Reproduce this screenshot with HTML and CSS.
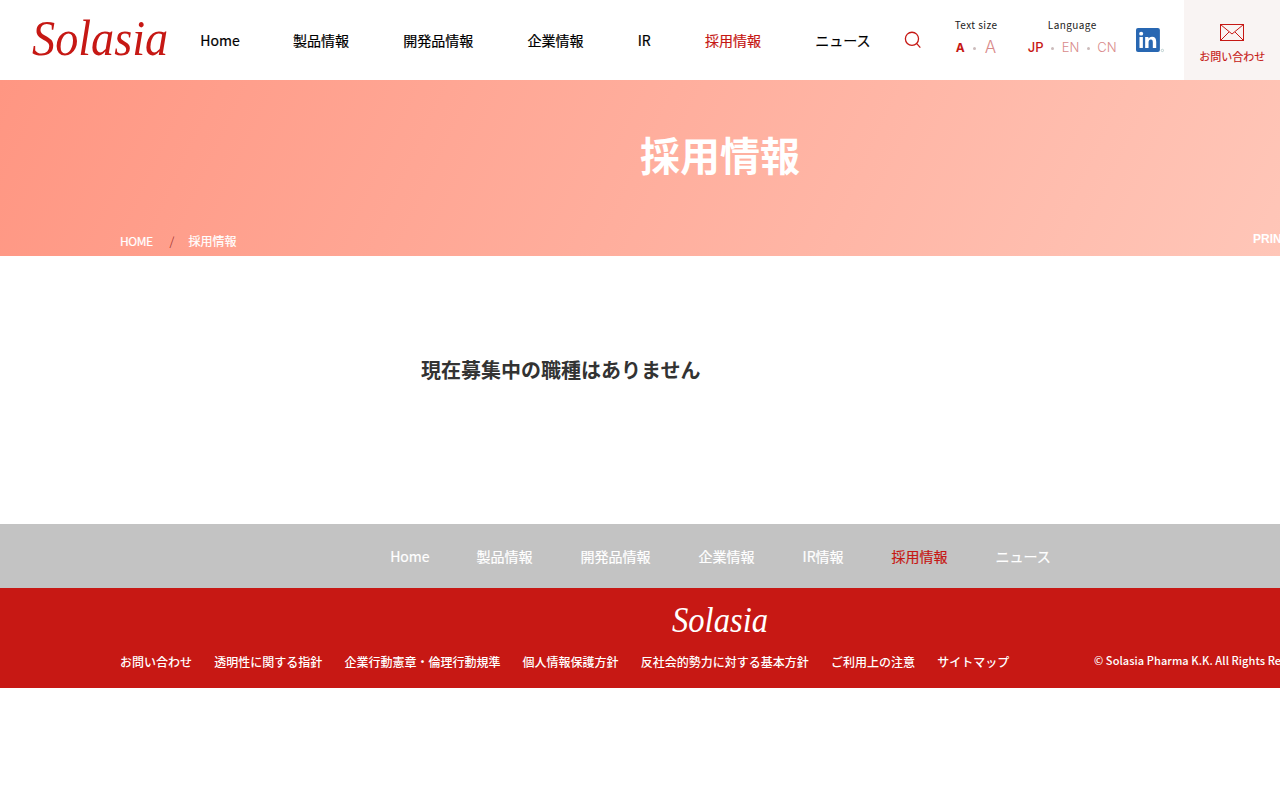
FILE: index.html
```html
<!DOCTYPE html>
<html lang="ja">
<head>
<meta charset="utf-8">
<title>採用情報 | Solasia</title>
<link rel="stylesheet" href="styles.css">
</head>
<body>
<header class="header">
  <a class="logo"><span>Solasia</span></a>
  <nav class="gnav">
    <a>Home</a><a>製品情報</a><a>開発品情報</a><a>企業情報</a><a>IR</a><a class="on">採用情報</a><a>ニュース</a>
  </nav>
  <svg class="search" width="18" height="18" viewBox="0 0 18 18" fill="none" stroke="#c61814" stroke-width="1.3"><circle cx="8" cy="7.8" r="6.6"/><path d="M12.8 12.6l3.6 4"/></svg>
  <div class="tool tool-size">
    <div class="tool-label">Text size</div>
    <div class="tool-row"><b class="cur">A</b><i class="dot"></i><span class="big">A</span></div>
  </div>
  <div class="tool tool-lang">
    <div class="tool-label">Language</div>
    <div class="tool-row"><b class="cur">JP</b><i class="dot"></i><span>EN</span><i class="dot"></i><span>CN</span></div>
  </div>
  <svg class="linkedin" width="29" height="25" viewBox="0 0 29 25"><rect width="24" height="24" rx="2" fill="#2867b2"/><g fill="#fff"><circle cx="5.2" cy="5.6" r="2"/><rect x="3.5" y="9" width="3.4" height="11"/><path d="M9.2 9h3.3v1.6c.7-1.1 1.9-1.9 3.6-1.9 3 0 4.2 1.9 4.2 5V20h-3.400v-5.600c0-1.600-.5-2.800-1.900-2.800-1.500 0-2.400 1.100-2.400 2.900V20H9.200z"/></g><circle cx="26.500" cy="22.500" r="1.200" fill="none" stroke="#8aa" stroke-width=".5"/></svg>
  <a class="contact">
    <svg width="24" height="17" viewBox="0 0 24 17" fill="none" stroke="#c61814" stroke-width="1"><rect x=".5" y=".5" width="23" height="16"/><path d="M.5.5L12 10 23.500.5M.5 16.500l8.500-8.500M23.500 16.500L15 8"/></svg>
    <span>お問い合わせ</span>
  </a>
</header>
<section class="hero">
  <h1>採用情報</h1>
  <div class="crumbs"><a class="home">HOME</a><i>/</i><a>採用情報</a></div>
  <div class="print">PRINT</div>
</section>
<main class="main">
  <h2>現在募集中の職種はありません</h2>
</main>
<nav class="fnav">
  <a>Home</a><a>製品情報</a><a>開発品情報</a><a>企業情報</a><a>IR情報</a><a class="on">採用情報</a><a>ニュース</a>
</nav>
<footer class="footer">
  <div class="flogo"><span>Solasia</span></div>
  <div class="fbottom">
    <div class="flinks"><a>お問い合わせ</a><a>透明性に関する指針</a><a>企業行動憲章・倫理行動規準</a><a>個人情報保護方針</a><a>反社会的勢力に対する基本方針</a><a>ご利用上の注意</a><a>サイトマップ</a></div>
    <div class="copy">© Solasia Pharma K.K. All Rights Reserved.</div>
  </div>
</footer>
</body>
</html>
```
FILE: styles.css
```css
* { box-sizing: border-box; }
html, body { margin: 0; padding: 0; background: #fff; overflow-x: hidden; }
body { font-family: "Noto Sans CJK JP", "Noto Sans", sans-serif; color: #000; width: 1280px; overflow: hidden; height: 800px; }
i { font-style: normal; }
.header { display: flex; align-items: center; height: 80px; }
.logo { font: italic 50px/80px "Liberation Serif", serif; color: #c61814; margin-left: 32px; width: 168px; }
.logo span { display: inline-block; transform: translateY(-2px) scaleX(.925); transform-origin: 0 50%; }
.gnav { display: flex; gap: 54.25px; font-size: 14px; font-weight: 400; -webkit-text-stroke: .2px currentColor; white-space: nowrap; width: 704px; }
.gnav a { line-height: 80px; }
.gnav a:first-child { margin-left: 1px; margin-right: -1px; }
.gnav .on { color: #c61814; }
.search { margin-left: 4px; }
.tool { text-align: center; margin-top: 2px; }
.tool-size { margin-left: 31px; width: 46px; }
.tool-lang { margin-left: 27.5px; width: 92px; }
.tool-label { font-size: 10px; line-height: 14px; letter-spacing: .4px; color: #222; margin-top: -7px; margin-bottom: 5px; }
.tool-row { display: flex; align-items: center; justify-content: center; height: 20px; font-family: "Inter", "Liberation Sans", sans-serif; font-weight: 300; font-size: 13px; color: #d98a8a; white-space: nowrap; gap: 7.5px; }
.tool-size .tool-row { gap: 8.5px; }
.tool-row .cur { color: #c61814; font-weight: 500; }
.tool-size .cur { font-weight: 700; font-size: 12px; }
.tool-row .big { font-size: 17px; font-weight: 300; }
.dot { width: 3px; height: 3px; border-radius: 50%; background: #cbb; margin-top: 3px; }
.linkedin { margin-left: 17.5px; }
.contact { margin-left: 20px; width: 96px; height: 80px; background: #f9f4f3; display: flex; flex-direction: column; align-items: center; padding-top: 24px; color: #c61814; font-size: 11px; font-weight: 400; -webkit-text-stroke: .15px currentColor; }
.contact span { line-height: 16px; margin-top: 7px; }
.hero { position: relative; height: 176px; background-image: linear-gradient(115deg, #ff9682 0%, #ffc6b8 100%); color: #fff; }
.hero h1 { margin: 0; font-size: 40px; font-weight: 700; line-height: 60px; text-align: center; padding-top: 44px; padding-left: 160px; }
.crumbs { position: absolute; left: 120px; bottom: 6px; display: flex; gap: 14px; font-size: 12px; font-weight: 400; -webkit-text-stroke: .2px currentColor; line-height: 18px; }
.crumbs .home { letter-spacing: -.5px; }
.crumbs i { color: #8a1010; font-weight: 300; width: 5px; -webkit-text-stroke: 0; margin-left: 3px; }
.print { position: absolute; left: 1253px; bottom: 8px; font-size: 12px; font-weight: 700; line-height: 18px; white-space: nowrap; font-family: "Liberation Sans", sans-serif; }
.main { height: 268px; padding: 98px 0 0 421px; }
.main h2 { margin: 0; font-size: 20px; line-height: 32px; font-weight: 700; color: #333; }
.fnav { height: 64px; background: #c3c3c3; display: flex; justify-content: center; align-items: center; gap: 48px; padding-left: 160px; font-size: 14px; font-weight: 400; -webkit-text-stroke: .2px currentColor; color: #fff; }
.fnav a:first-child { margin-left: 1px; margin-right: -1px; }
.fnav .on { color: #c61814; }
.footer { height: 100px; background: #c71814; color: #fff; position: relative; overflow: hidden; }
.flogo { font: italic 36px/40px "Liberation Serif", serif; text-align: center; padding-top: 12px; padding-left: 160px; }
.flogo span { display: inline-block; transform: scaleX(.905); }
.fbottom { display: flex; white-space: nowrap; padding-left: 120px; position: absolute; top: 64px; left: 0; width: 1400px; }
.flinks { display: flex; gap: 22.2px; font-size: 12px; font-weight: 500; line-height: 20px; }
.copy { position: absolute; left: 1094px; top: -1px; font-size: 11px; font-weight: 500; line-height: 18px; letter-spacing: .08px; }
```
